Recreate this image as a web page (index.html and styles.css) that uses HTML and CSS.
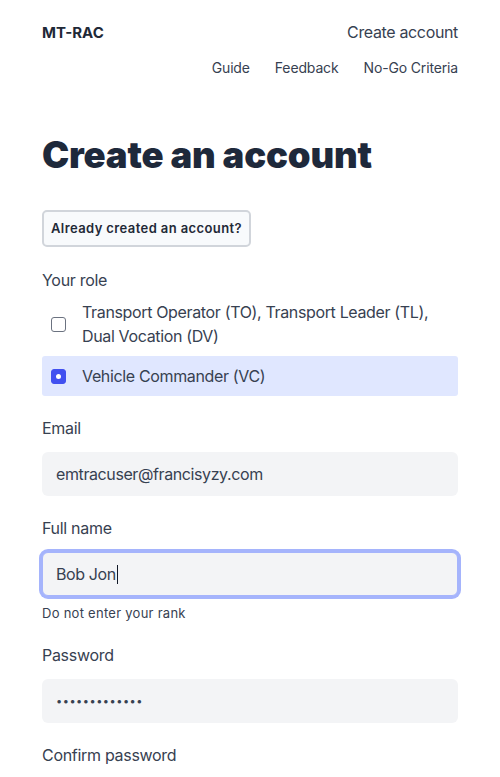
FILE: index.html
```html
<!DOCTYPE html>
<html lang="en">
<head>
<meta charset="utf-8">
<title>Create an account - MT-RAC</title>
<link rel="stylesheet" href="styles.css">
</head>
<body>
<div class="page">
  <header class="header">
    <div class="top-row">
      <span class="brand">MT-RAC</span>
      <span class="create-link">Create account</span>
    </div>
    <nav class="nav">
      <span>Guide</span>
      <span>Feedback</span>
      <span>No-Go Criteria</span>
    </nav>
  </header>

  <h1 class="title">Create an account</h1>

  <button class="secondary-btn" type="button">Already created an account?</button>

  <div class="field role-field">
    <div class="label">Your role</div>
    <div class="option">
      <span class="box"></span>
      <span class="option-text">Transport Operator (TO), Transport Leader (TL), Dual Vocation (DV)</span>
    </div>
    <div class="option selected">
      <span class="box checked"></span>
      <span class="option-text">Vehicle Commander (VC)</span>
    </div>
  </div>

  <div class="field">
    <div class="label">Email</div>
    <div class="input">emtracuser@francisyzy.com</div>
  </div>

  <div class="field">
    <div class="label">Full name</div>
    <div class="input focused">Bob Jon<span class="caret"></span></div>
    <div class="help">Do not enter your rank</div>
  </div>

  <div class="field">
    <div class="label">Password</div>
    <div class="input dots">•••••••••••••</div>
  </div>

  <div class="field">
    <div class="label">Confirm password</div>
  </div>
</div>
</body>
</html>
```

FILE: styles.css
```css
* { box-sizing: border-box; }
html, body { margin: 0; padding: 0; background: #fff; }
body {
  font-family: Inter, "Noto Sans", "Liberation Sans", sans-serif;
  color: #374151;
}
.page {
  padding: 20px 42px 0 42px;
}
.header { display: flex; flex-direction: column; }
.top-row {
  display: flex;
  justify-content: space-between;
  align-items: center;
  height: 24px;
}
.brand {
  font-size: 15px;
  font-weight: 700;
  color: #1f2937;
}
.create-link {
  font-size: 16px;
  letter-spacing: -0.35px;
  color: #374151;
}
.nav {
  display: flex;
  justify-content: flex-end;
  gap: 25px;
  margin-top: 14px;
  font-size: 14px;
  line-height: 20px;
  letter-spacing: -0.15px;
  color: #374151;
}
.title {
  margin: 57px 0 0 0;
  font-size: 36.5px;
  line-height: 40px;
  font-weight: 900;
  color: #1e293b;
  letter-spacing: -0.2px;
}
.secondary-btn {
  display: block;
  margin-top: 35px;
  font-family: inherit;
  font-size: 13px;
  font-weight: 600;
  letter-spacing: 0.4px;
  color: #1f2937;
  line-height: 21px;
  padding: 6px 7px;
  background: #f8fafc;
  border: 2px solid #d1d5db;
  border-radius: 5px;
}
.field { margin-top: 20px; }
.role-field { margin-top: 21px; }
.label {
  font-size: 16px;
  line-height: 24px;
  letter-spacing: -0.3px;
  color: #374151;
}
.option {
  display: flex;
  align-items: center;
  gap: 16px;
  padding: 8px 9px;
  font-size: 16px;
  line-height: 24px;
  letter-spacing: -0.35px;
  border-radius: 3px;
}
.option.selected { background: #e0e7ff; }
.box {
  flex: none;
  width: 15px;
  height: 15px;
  border: 1px solid #6b7280;
  border-radius: 3px;
  background: #fff;
  position: relative;
}
.box.checked {
  background: #4150f0;
  border-color: #4150f0;
}
.box.checked::after {
  content: "";
  position: absolute;
  left: 50%;
  top: 50%;
  width: 5px;
  height: 5px;
  margin: -2.5px 0 0 -2.5px;
  border-radius: 50%;
  background: #fff;
}
.option-text { color: #374151; }
.input {
  margin-top: 12px;
  height: 44px;
  background: #f3f4f6;
  border-radius: 6px;
  padding: 0 14px;
  display: flex;
  align-items: center;
  font-size: 16px;
  letter-spacing: -0.4px;
  color: #374151;
}
.input.focused {
  box-shadow: 0 0 0 3px #a5b4fc;
  border: 1px solid #a5b4fc;
  padding-left: 13px;
}
.caret {
  display: inline-block;
  width: 1px;
  height: 19px;
  background: #111827;
  margin-left: 1px;
}
.input.dots {
  font-size: 11px;
  letter-spacing: 0.5px;
}
.help {
  margin-top: 7px;
  font-size: 13px;
  line-height: 20px;
  letter-spacing: 0.27px;
  color: #374151;
}
```
